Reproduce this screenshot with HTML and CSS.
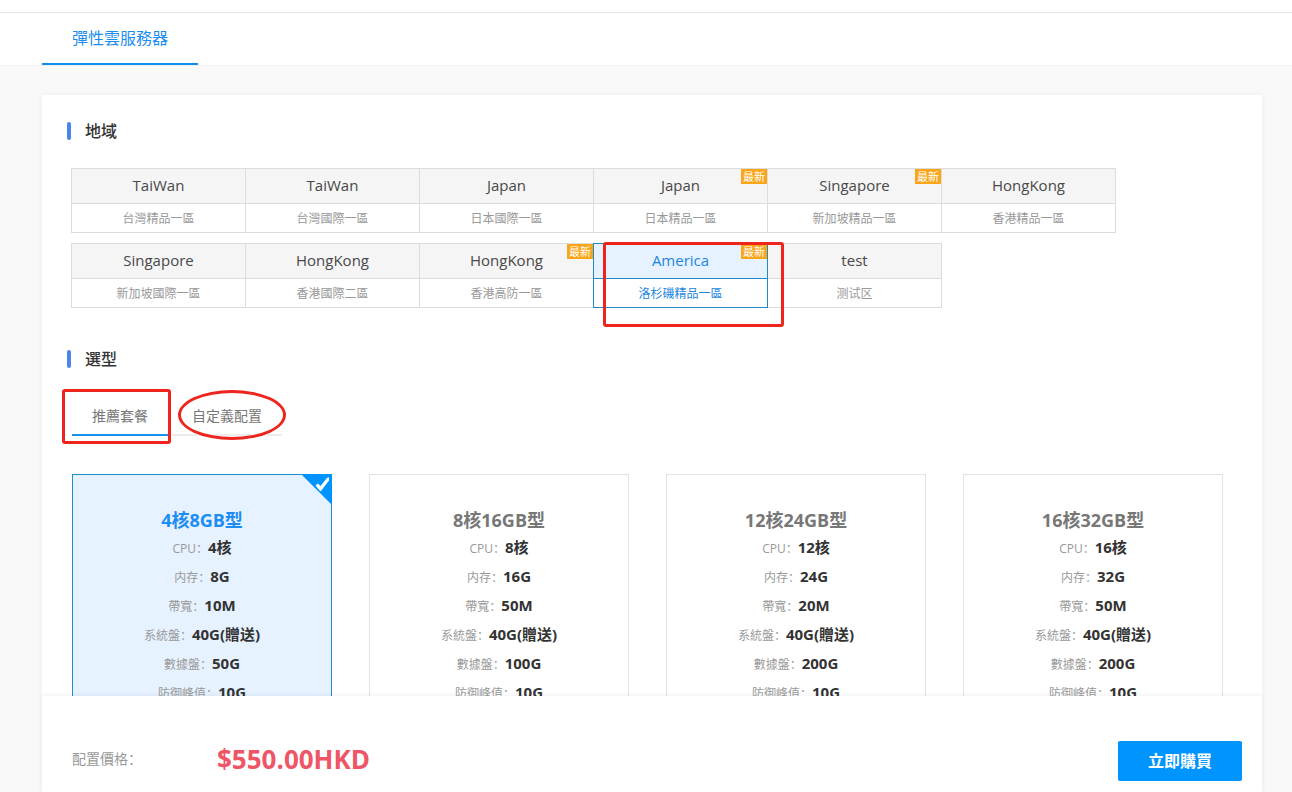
FILE: index.html
```html
<!DOCTYPE html>
<html lang="zh-Hans">
<head>
<meta charset="utf-8">
<title>彈性雲服務器</title>
<link rel="stylesheet" href="styles.css">
</head>
<body>
<header class="topbar">
  <nav class="topnav"><a class="topnav-link" href="#">彈性雲服務器</a></nav>
</header>
<main class="panel">
  <section>
    <h2 class="section-title">地域</h2>
    <div class="regions">
      <button class="region" type="button"><span class="region-name">TaiWan</span><span class="region-zone">台灣精品一區</span></button>
      <button class="region" type="button"><span class="region-name">TaiWan</span><span class="region-zone">台灣國際一區</span></button>
      <button class="region" type="button"><span class="region-name">Japan</span><span class="region-zone">日本國際一區</span></button>
      <button class="region" type="button"><span class="region-name">Japan</span><span class="region-zone">日本精品一區</span><span class="badge">最新</span></button>
      <button class="region" type="button"><span class="region-name">Singapore</span><span class="region-zone">新加坡精品一區</span><span class="badge">最新</span></button>
      <button class="region" type="button"><span class="region-name">HongKong</span><span class="region-zone">香港精品一區</span></button>
      <button class="region" type="button"><span class="region-name">Singapore</span><span class="region-zone">新加坡國際一區</span></button>
      <button class="region" type="button"><span class="region-name">HongKong</span><span class="region-zone">香港國際二區</span></button>
      <button class="region" type="button"><span class="region-name">HongKong</span><span class="region-zone">香港高防一區</span><span class="badge">最新</span></button>
      <button class="region selected" type="button" aria-pressed="true"><span class="region-name">America</span><span class="region-zone">洛杉磯精品一區</span><span class="badge">最新</span><span class="mark mark-region"></span></button>
      <button class="region" type="button"><span class="region-name">test</span><span class="region-zone">测试区</span></button>
    </div>
  </section>
  <section>
    <h2 class="section-title">選型</h2>
    <div class="tabs" role="tablist">
      <button class="tab active" type="button" role="tab" aria-selected="true">推薦套餐<span class="mark mark-tab"></span></button>
      <button class="tab" type="button" role="tab" aria-selected="false">自定義配置<span class="mark mark-oval"></span></button>
    </div>
    <div class="plans">
      <article class="plan selected">
        <svg class="plan-check" viewBox="0 0 31 31" aria-hidden="true"><path d="M0 0H31V31Z" fill="#0094ff"/><path d="M14.500 11.500L17 9.500L19.500 12L26 4L28 3V6.500L20 17H19Z" fill="#fff"/></svg>
        <h3 class="plan-title">4核8GB型</h3>
        <dl class="specs">
          <div class="spec"><dt>CPU：</dt><dd>4核</dd></div>
          <div class="spec"><dt>内存：</dt><dd>8G</dd></div>
          <div class="spec"><dt>帶寬：</dt><dd>10M</dd></div>
          <div class="spec"><dt>系統盤：</dt><dd>40G(贈送)</dd></div>
          <div class="spec"><dt>數據盤：</dt><dd>50G</dd></div>
          <div class="spec"><dt>防御峰值：</dt><dd>10G</dd></div>
        </dl>
      </article>
      <article class="plan">
        <h3 class="plan-title">8核16GB型</h3>
        <dl class="specs">
          <div class="spec"><dt>CPU：</dt><dd>8核</dd></div>
          <div class="spec"><dt>内存：</dt><dd>16G</dd></div>
          <div class="spec"><dt>帶寬：</dt><dd>50M</dd></div>
          <div class="spec"><dt>系統盤：</dt><dd>40G(贈送)</dd></div>
          <div class="spec"><dt>數據盤：</dt><dd>100G</dd></div>
          <div class="spec"><dt>防御峰值：</dt><dd>10G</dd></div>
        </dl>
      </article>
      <article class="plan">
        <h3 class="plan-title">12核24GB型</h3>
        <dl class="specs">
          <div class="spec"><dt>CPU：</dt><dd>12核</dd></div>
          <div class="spec"><dt>内存：</dt><dd>24G</dd></div>
          <div class="spec"><dt>帶寬：</dt><dd>20M</dd></div>
          <div class="spec"><dt>系統盤：</dt><dd>40G(贈送)</dd></div>
          <div class="spec"><dt>數據盤：</dt><dd>200G</dd></div>
          <div class="spec"><dt>防御峰值：</dt><dd>10G</dd></div>
        </dl>
      </article>
      <article class="plan">
        <h3 class="plan-title">16核32GB型</h3>
        <dl class="specs">
          <div class="spec"><dt>CPU：</dt><dd>16核</dd></div>
          <div class="spec"><dt>内存：</dt><dd>32G</dd></div>
          <div class="spec"><dt>帶寬：</dt><dd>50M</dd></div>
          <div class="spec"><dt>系統盤：</dt><dd>40G(贈送)</dd></div>
          <div class="spec"><dt>數據盤：</dt><dd>200G</dd></div>
          <div class="spec"><dt>防御峰值：</dt><dd>10G</dd></div>
        </dl>
      </article>
    </div>
  </section>
</main>
<footer class="buybar">
  <span class="price-label">配置價格：</span>
  <strong class="price">$550.00HKD</strong>
  <button class="buy" type="button">立即購買</button>
</footer>
</body>
</html>
```
FILE: styles.css
```css
* { box-sizing: border-box; }

body {
  margin: 0;
  height: 100vh;
  display: flex;
  flex-direction: column;
  overflow: hidden;
  background: #f9f9f9;
  color: #333;
  font-family: "Open Sans", "Noto Sans CJK SC", sans-serif;
  font-size: 14px;
}

button {
  margin: 0;
  padding: 0;
  border: 0;
  background: none;
  color: inherit;
  font: inherit;
  cursor: pointer;
}

.topbar {
  flex: none;
  padding: 12px 42px 0;
  background: #fff;
  border-bottom: 1px solid #f0f0f0;
}

.topnav {
  display: flex;
  margin: 0 -42px;
  padding: 0 42px;
  border-top: 1px solid #e6e6e6;
}

.topnav-link {
  padding: 0 30px;
  border-bottom: 2px solid #0e90ea;
  color: #1c8df0;
  font-size: 16px;
  line-height: 50px;
  text-decoration: none;
}

.panel {
  flex: 1;
  min-height: 0;
  margin: 29px 30px 0 42px;
  padding: 24px 30px 0;
  overflow: hidden;
  background: #fff;
  box-shadow: 0 0 6px rgba(0, 0, 0, 0.06);
}

.section-title {
  display: flex;
  align-items: center;
  gap: 14px;
  margin: 0 0 0 -5px;
  font-size: 16px;
  font-weight: 500;
  line-height: 24px;
}

.section-title::before {
  content: "";
  width: 4px;
  height: 18px;
  border-radius: 2px;
  background: #4c84ea;
}

.regions {
  display: flex;
  flex-wrap: wrap;
  row-gap: 10px;
  margin: 25px 0 39px -1px;
}

.region {
  position: relative;
  display: flex;
  flex-direction: column;
  width: 175px;
  margin-right: -1px;
  border: 1px solid #dcdcdc;
  text-align: center;
}

.region-name {
  width: 100%;
  padding-bottom: 2px;
  border-bottom: 1px solid #dcdcdc;
  background: #f5f5f5;
  color: #484848;
  font-size: 15px;
  line-height: 32px;
}

.region-zone {
  width: 100%;
  padding-top: 2px;
  color: #999;
  font-size: 12px;
  line-height: 26px;
}

.region.selected {
  z-index: 1;
  border-color: #1c8bc8;
}

.region.selected .region-name {
  border-color: #1c8bc8;
  background: #e6f2ff;
  color: #1c86e0;
}

.region.selected .region-zone { color: #1c86e0; }

.badge {
  position: absolute;
  top: 0;
  right: 0;
  padding: 0 2px;
  background: #faa51a;
  color: #fff;
  font-size: 11px;
  line-height: 15px;
}

.mark {
  position: absolute;
  border: 3px solid #ee251c;
  border-radius: 3px;
  pointer-events: none;
}

.mark-region { inset: -2px -17px -20px 9px; }
.mark-tab { inset: -9px -3px -10px -10px; }
.mark-oval { inset: -8px -4px -6px 6px; border-radius: 50%; }

.tabs {
  display: flex;
  gap: 4px;
  margin: 27px 0 38px;
}

.tab {
  position: relative;
  padding: 0 20px;
  border-bottom: 2px solid #ececec;
  color: #777;
  line-height: 36px;
}

.tab.active { border-color: #1690ea; }

.plans {
  display: grid;
  grid-template-columns: repeat(auto-fill, 260px);
  gap: 37px;
}

.plan {
  position: relative;
  padding: 32px 0;
  border: 1px solid #e3e3e3;
  text-align: center;
}

.plan.selected {
  border-color: #1c8fcc;
  background: #e6f2ff;
}

.plan-check {
  position: absolute;
  top: -1px;
  right: -1px;
  width: 31px;
  height: 31px;
}

.plan-title {
  margin: 0;
  color: #777;
  font-size: 18px;
  font-weight: 700;
  line-height: 26px;
}

.plan.selected .plan-title { color: #1c8df5; }

.specs { margin: 0; }

.spec {
  display: flex;
  justify-content: center;
  align-items: baseline;
  height: 29px;
  line-height: 29px;
}

.spec dt {
  color: #999;
  font-size: 12px;
}

.spec dd {
  margin: 0;
  font-size: 15px;
  font-weight: 700;
}

.buybar {
  position: relative;
  flex: none;
  display: flex;
  align-items: flex-start;
  margin: 0 30px 0 42px;
  padding: 45px 20px 11px 30px;
  background: #fff;
  box-shadow: 0 0 6px rgba(0, 0, 0, 0.08);
}

.price-label {
  width: 145px;
  color: #999;
  line-height: 36px;
}

.price {
  color: #ee5566;
  font-size: 26px;
  line-height: 36px;
}

.buy {
  width: 124px;
  margin-left: auto;
  border-radius: 2px;
  background: #0094ff;
  color: #fff;
  font-size: 16px;
  font-weight: 700;
  line-height: 40px;
}
```
